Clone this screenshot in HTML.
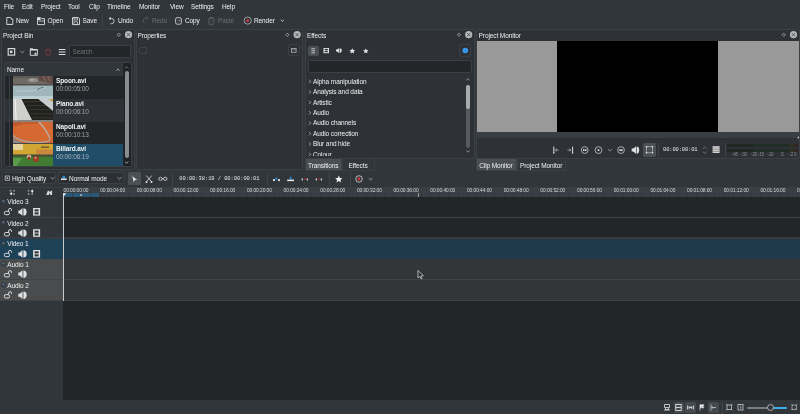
<!DOCTYPE html>
<html><head><meta charset="utf-8">
<style>
*{margin:0;padding:0;box-sizing:border-box}
html,body{width:800px;height:414px;overflow:hidden;background:#31363b}
body{position:relative;font-family:"Liberation Sans",sans-serif;font-size:6.5px;color:#eff0f1}
#w{position:absolute;left:0;top:0;width:800px;height:414px;will-change:transform;overflow:hidden}
.a{position:absolute}
.t{position:absolute;white-space:nowrap;line-height:8px;letter-spacing:-0.1px}
.dis{color:#6b7075}
.mono{font-family:"Liberation Mono",monospace}
svg{position:absolute;left:0;top:0}
.panel{position:absolute;background:#2e3236;border:1px solid #3b4045;border-radius:2px}
</style></head><body><div id="w">
<div class="t " style="left:4px;top:2.6999999999999993px;">File</div>
<div class="t " style="left:22px;top:2.6999999999999993px;">Edit</div>
<div class="t " style="left:41px;top:2.6999999999999993px;">Project</div>
<div class="t " style="left:68px;top:2.6999999999999993px;">Tool</div>
<div class="t " style="left:89px;top:2.6999999999999993px;">Clip</div>
<div class="t " style="left:107px;top:2.6999999999999993px;">Timeline</div>
<div class="t " style="left:139px;top:2.6999999999999993px;">Monitor</div>
<div class="t " style="left:170px;top:2.6999999999999993px;">View</div>
<div class="t " style="left:191px;top:2.6999999999999993px;">Settings</div>
<div class="t " style="left:222px;top:2.6999999999999993px;">Help</div>
<div class="t " style="left:16px;top:16.5px;">New</div>
<div class="t " style="left:47.5px;top:16.5px;">Open</div>
<div class="t " style="left:82.5px;top:16.5px;">Save</div>
<div class="t " style="left:118px;top:16.5px;">Undo</div>
<div class="t dis" style="left:152px;top:16.5px;">Redo</div>
<div class="t " style="left:185px;top:16.5px;">Copy</div>
<div class="t dis" style="left:218px;top:16.5px;">Paste</div>
<div class="t " style="left:254px;top:16.5px;">Render</div>
<div class="a" style="left:101.5px;top:14px;width:1px;height:13px;background:#40454a;"></div>
<div class="panel" style="left:1px;top:29px;width:134px;height:141px"></div>
<div class="panel" style="left:136px;top:29px;width:167px;height:141px"></div>
<div class="panel" style="left:305px;top:29px;width:170px;height:130px"></div>
<div class="panel" style="left:476px;top:29px;width:324px;height:130px"></div>
<div class="t " style="left:3px;top:32.3px;">Project Bin</div>
<div class="t " style="left:137.5px;top:32.3px;">Properties</div>
<div class="t " style="left:307px;top:32.3px;">Effects</div>
<div class="t " style="left:478.6px;top:32.3px;">Project Monitor</div>
<div class="a" style="left:69px;top:45px;width:62px;height:13.4px;background:#232629;border:1px solid #3b4045;border-radius:2px"></div>
<div class="t dis" style="left:72.5px;top:48.1px;">Search</div>
<div class="a" style="left:4px;top:62px;width:127.5px;height:105px;background:#232629;border:1px solid #3b4045;border-radius:2px"></div>
<div class="a" style="left:5px;top:63px;width:118px;height:12.7px;background:#31363b;"></div>
<div class="a" style="left:5px;top:75.7px;width:118px;height:0.6px;background:#3b4045;"></div>
<div class="t " style="left:7px;top:66.3px;">Name</div>
<div class="a" style="left:5px;top:76px;width:118.5px;height:22.799999999999997px;background:#232629;"></div>
<div class="t " style="left:56px;top:77.0px;font-weight:bold">Spoon.avi</div>
<div class="t " style="left:56px;top:85.0px;color:#9da0a3;letter-spacing:-0.15px">00:00:05:00</div>
<div class="a" style="left:5px;top:98.8px;width:118.5px;height:23.0px;background:#2e3236;"></div>
<div class="t " style="left:56px;top:99.8px;font-weight:bold">Piano.avi</div>
<div class="t " style="left:56px;top:107.8px;color:#9da0a3;letter-spacing:-0.15px">00:00:06:10</div>
<div class="a" style="left:5px;top:121.8px;width:118.5px;height:22.500000000000014px;background:#232629;"></div>
<div class="t " style="left:56px;top:122.80000000000001px;font-weight:bold">Napoli.avi</div>
<div class="t " style="left:56px;top:130.8px;color:#9da0a3;letter-spacing:-0.15px">00:00:10:13</div>
<div class="a" style="left:5px;top:144.3px;width:8px;height:21.899999999999977px;background:#232629;"></div>
<div class="a" style="left:53px;top:144.3px;width:69.8px;height:21.899999999999977px;background:#1f4c67;"></div>
<div class="t " style="left:56px;top:145.3px;font-weight:bold">Billard.avi</div>
<div class="t " style="left:56px;top:153.3px;color:#a5b5c0;letter-spacing:-0.15px">00:00:06:19</div>
<div class="a" style="left:8.5px;top:76px;width:0.6px;height:90px;background:#3a3f44;"></div>
<div class="a" style="left:12.5px;top:76px;width:0.6px;height:90px;background:#3a3f44;"></div>
<svg style="left:13px;top:76px;height:22.8px" width="40" height="22.8" viewBox="0 0 40 22.5" preserveAspectRatio="none"><defs><filter id="bl"><feGaussianBlur stdDeviation="0.5"/></filter></defs>
<g filter="url(#bl)">
<rect x="-1" y="-1" width="42" height="10" fill="#6e6a66"/>
<rect x="-1" y="-1" width="42" height="3" fill="#5e5a57"/>
<ellipse cx="20" cy="4.2" rx="5" ry="2.2" fill="#8e8c88"/>
<ellipse cx="19" cy="3.6" rx="2.5" ry="1" fill="#a8a6a2"/>
<path d="M26 -1h15v9l-7 -1.5 -8 -2z" fill="#5e4a44"/>
<path d="M30 0l3 5.5M34.5 -0.5l3 6" stroke="#8a6a60" stroke-width="1"/>
<rect x="-1" y="8.2" width="42" height="1.2" fill="#4a3e38"/>
<rect x="-1" y="9.3" width="42" height="14" fill="#9fb7bb"/>
<rect x="-1" y="19.8" width="42" height="4" fill="#bcd0d4"/>
<path d="M2 15l20 -0.5 11 -3" stroke="#c8d8da" stroke-width="0.6" fill="none"/>
<path d="M24 14l3 -2 3.5 -0.8" stroke="#5a6a6c" stroke-width="0.9" fill="none"/>
</g></svg>
<svg style="left:13px;top:98.8px;height:23px" width="40" height="23" viewBox="0 0 40 22.5" preserveAspectRatio="none"><defs><filter id="bl2"><feGaussianBlur stdDeviation="0.5"/></filter></defs>
<g filter="url(#bl2)">
<rect x="-1" y="-1" width="42" height="25" fill="#cfcfce"/><rect x="-1" y="20.5" width="42" height="3" fill="#8a8480"/>
<path d="M8 -1h23l12 13v8.5h-24z" fill="#22201e"/>
<path d="M11 2.5h21M13.5 6.5h23M16 10.5h25M18 14.5h23M20 18.5h21" stroke="#3d3a37" stroke-width="0.9"/>
<path d="M24 -1h17v13.5z" fill="#c9cdd0"/>
<path d="M33 -1h8v4.5z" fill="#c2a650"/>
<path d="M1.5 -1h1.2l1 22h-1.2z" fill="#eeeeec"/>
</g></svg>
<svg style="left:13px;top:121.8px;height:22.5px" width="40" height="22.5" viewBox="0 0 40 23" preserveAspectRatio="none"><defs><filter id="bl3"><feGaussianBlur stdDeviation="0.5"/></filter></defs>
<g filter="url(#bl3)">
<rect x="-1" y="-1" width="42" height="25" fill="#d46a32"/>
<path d="M-1 4q14 -4 26 -3" stroke="#c45a2a" stroke-width="2" fill="none"/>
<path d="M-1 -1h12l-4 3h-8z" fill="#b85a34"/>
<path d="M-1 13q8 8 24 8q12 0 14 -3" stroke="#a9a5a2" stroke-width="1.6" fill="none"/>
<path d="M-1 15q6 7 22 8h-22z" fill="#8a8886"/>
<path d="M25 -1q8 8 12 18" stroke="#b8b4b0" stroke-width="1.2" fill="none"/>
<path d="M30 -1h11v8q-4 -6 -11 -8z" fill="#c96a3a"/>
<rect x="-1" y="21.5" width="42" height="3" fill="#4a4644"/>
</g></svg>
<svg style="left:13px;top:144.3px;height:21.9px" width="40" height="21.9" viewBox="0 0 40 22" preserveAspectRatio="none"><defs><filter id="bl4"><feGaussianBlur stdDeviation="0.5"/></filter></defs>
<g filter="url(#bl4)">
<rect x="-1" y="-1" width="42" height="12" fill="#d2a630"/>
<rect x="-1" y="-1" width="11" height="7" fill="#e6d4a0"/>
<rect x="23" y="5.5" width="18" height="5" fill="#c9883c"/>
<rect x="28" y="2.5" width="8" height="1.4" fill="#6a5a30"/>
<rect x="-1" y="10.5" width="42" height="2.2" fill="#4d4a3a"/>
<rect x="-1" y="12.5" width="42" height="11" fill="#3f7c33"/>
<path d="M-1 14h10l-6 9h-5z" fill="#5a9a4a"/>
<circle cx="16" cy="13" r="2.3" fill="#d0b8a0"/>
<circle cx="16" cy="14.2" r="1.6" fill="#9a3828"/>
<circle cx="23" cy="15" r="3" fill="#a23a26"/>
<circle cx="22.5" cy="13.8" r="1" fill="#e0a890"/>
</g></svg>

<div class="a" style="left:123.5px;top:63px;width:7px;height:103px;background:#1f2225;"></div>
<div class="a" style="left:124.6px;top:71px;width:4px;height:86.5px;background:#8a8d90;border-radius:2px"></div>
<div class="a" style="left:139px;top:46.8px;width:8px;height:7.5px;border:1px solid #3f4449;border-radius:2px"></div>
<div class="a" style="left:287.8px;top:44.3px;width:11.8px;height:12px;border:1px solid #3a3f44;border-radius:2px"></div>
<div class="a" style="left:308px;top:45.5px;width:10.8px;height:10.5px;background:#4b5055;border-radius:2px"></div>
<div class="a" style="left:459px;top:44.3px;width:12.4px;height:12.3px;border:1px solid #3a3f44;border-radius:2px"></div>
<div class="a" style="left:308px;top:59.5px;width:163.5px;height:13px;background:#232629;border:1px solid #3b4045;border-radius:2px"></div>
<div class="t " style="left:313px;top:77.7px;">Alpha manipulation</div>
<div class="t " style="left:313px;top:88.12px;">Analysis and data</div>
<div class="t " style="left:313px;top:98.54px;">Artistic</div>
<div class="t " style="left:313px;top:108.96000000000001px;">Audio</div>
<div class="t " style="left:313px;top:119.38px;">Audio channels</div>
<div class="t " style="left:313px;top:129.8px;">Audio correction</div>
<div class="t " style="left:313px;top:140.22px;">Blur and hide</div>
<div class="t " style="left:313px;top:150.64px;">Colour</div>
<div class="a" style="left:306px;top:155.6px;width:159px;height:2.2px;background:#2e3236;"></div>
<div class="a" style="left:466px;top:84.5px;width:3.8px;height:63px;background:#575b5f;border-radius:2px"></div>
<div class="a" style="left:466px;top:84.5px;width:3.8px;height:24.5px;background:#a9abad;border-radius:2px"></div>
<div class="a" style="left:305px;top:158px;width:37px;height:12.6px;background:#4a4f54;border:1px solid #3b4045"></div>
<div class="a" style="left:342px;top:158px;width:32.5px;height:12.6px;background:#31363b;border:1px solid #3b4045"></div>
<div class="t " style="left:308px;top:161.9px;">Transitions</div>
<div class="t " style="left:348.5px;top:161.9px;">Effects</div>
<div class="a" style="left:476.7px;top:41.2px;width:80.5px;height:91px;background:#999999;"></div>
<div class="a" style="left:557.2px;top:41.2px;width:161px;height:91px;background:#000000;"></div>
<div class="a" style="left:718.2px;top:41.2px;width:80.8px;height:91px;background:#999999;"></div>
<div class="a" style="left:476.7px;top:132.2px;width:322.3px;height:6px;background:#393e43;"></div>
<div class="a" style="left:476px;top:158px;width:41px;height:12.6px;background:#4a4f54;border:1px solid #3b4045"></div>
<div class="a" style="left:517px;top:158px;width:48.6px;height:12.6px;background:#31363b;border:1px solid #3b4045"></div>
<div class="t " style="left:479.2px;top:161.9px;">Clip Monitor</div>
<div class="t " style="left:520px;top:161.9px;">Project Monitor</div>
<div class="a" style="left:642.9px;top:143px;width:13.1px;height:13.6px;background:#4b5055;border-radius:1.5px"></div>
<div class="a" style="left:658.1px;top:143px;width:0.8px;height:14px;background:#40454a;"></div>
<div class="t mono" style="left:663px;top:146.1px;font-size:5.4px;color:#e6e7e8">00:00:00:01</div>
<div class="a" style="left:725.4px;top:143px;width:0.8px;height:14px;background:#40454a;"></div>
<div class="a" style="left:726.6px;top:144px;width:27.2px;height:3.2px;background:#1e2722;"></div>
<div class="a" style="left:753.8px;top:144px;width:35.4px;height:3.2px;background:#212e26;"></div>
<div class="a" style="left:789.2px;top:144px;width:5.8px;height:3.2px;background:#2f3024;"></div>
<div class="a" style="left:795px;top:144px;width:3.2px;height:3.2px;background:#332426;"></div>
<div class="a" style="left:726.6px;top:148.6px;width:27.2px;height:3.2px;background:#1e2722;"></div>
<div class="a" style="left:753.8px;top:148.6px;width:35.4px;height:3.2px;background:#212e26;"></div>
<div class="a" style="left:789.2px;top:148.6px;width:5.8px;height:3.2px;background:#2f3024;"></div>
<div class="a" style="left:795px;top:148.6px;width:3.2px;height:3.2px;background:#332426;"></div>
<div class="t" style="left:731.8px;top:152px;font-size:4.6px;line-height:5px;letter-spacing:-0.15px;color:#8a8c8e">-45</div>
<div class="t" style="left:740.8px;top:152px;font-size:4.6px;line-height:5px;letter-spacing:-0.15px;color:#8a8c8e">-30</div>
<div class="t" style="left:751px;top:152px;font-size:4.6px;line-height:5px;letter-spacing:-0.15px;color:#8a8c8e">-20</div>
<div class="t" style="left:757.8px;top:152px;font-size:4.6px;line-height:5px;letter-spacing:-0.15px;color:#8a8c8e">-15</div>
<div class="t" style="left:767.3px;top:152px;font-size:4.6px;line-height:5px;letter-spacing:-0.15px;color:#8a8c8e">-10</div>
<div class="t" style="left:779.8px;top:152px;font-size:4.6px;line-height:5px;letter-spacing:-0.15px;color:#8a8c8e">-5</div>
<div class="t" style="left:789.3px;top:152px;font-size:4.6px;line-height:5px;letter-spacing:-0.15px;color:#8a8c8e">-2</div>
<div class="t" style="left:794px;top:152px;font-size:4.6px;line-height:5px;letter-spacing:-0.15px;color:#8a8c8e">0</div>
<div class="a" style="left:1.6px;top:172.4px;width:54.8px;height:11.8px;background:#2c3034;border:1px solid #3b4045;border-radius:2px"></div>
<div class="a" style="left:58.2px;top:172.4px;width:65.6px;height:11.8px;background:#2c3034;border:1px solid #3b4045;border-radius:2px"></div>
<div class="t " style="left:12px;top:174.5px;">High Quality</div>
<div class="t " style="left:69.1px;top:174.5px;">Normal mode</div>
<div class="a" style="left:128px;top:172.3px;width:13.1px;height:13.1px;background:#4b5055;border-radius:1.5px"></div>
<div class="a" style="left:171.6px;top:172.3px;width:0.8px;height:13.5px;background:#40454a;"></div>
<div class="t mono" style="left:179.3px;top:175.1px;font-size:5.4px;letter-spacing:-0.03px;color:#e6e7e8">00:00:38:19 / 00:00:00:01</div>
<div class="a" style="left:267.2px;top:172.3px;width:0.8px;height:13.5px;background:#40454a;"></div>
<div class="a" style="left:328.6px;top:172.3px;width:0.8px;height:13.5px;background:#40454a;"></div>
<div class="a" style="left:350.3px;top:172.3px;width:0.8px;height:13.5px;background:#40454a;"></div>
<div class="a" style="left:0px;top:186.6px;width:800px;height:0.8px;background:#3b4045;"></div>
<div class="a" style="left:63px;top:187.4px;width:737px;height:9.6px;background:#3a3f45;"></div>
<div class="a" style="left:63.3px;top:193px;width:0.8px;height:4px;background:#30353a;"></div>
<div class="a" style="left:72.5px;top:193px;width:0.8px;height:4px;background:#30353a;"></div>
<div class="a" style="left:81.6px;top:193px;width:0.8px;height:4px;background:#30353a;"></div>
<div class="a" style="left:90.8px;top:193px;width:0.8px;height:4px;background:#30353a;"></div>
<div class="a" style="left:100.0px;top:193px;width:0.8px;height:4px;background:#30353a;"></div>
<div class="a" style="left:109.2px;top:193px;width:0.8px;height:4px;background:#30353a;"></div>
<div class="a" style="left:118.3px;top:193px;width:0.8px;height:4px;background:#30353a;"></div>
<div class="a" style="left:127.5px;top:193px;width:0.8px;height:4px;background:#30353a;"></div>
<div class="a" style="left:136.7px;top:193px;width:0.8px;height:4px;background:#30353a;"></div>
<div class="a" style="left:145.8px;top:193px;width:0.8px;height:4px;background:#30353a;"></div>
<div class="a" style="left:155.0px;top:193px;width:0.8px;height:4px;background:#30353a;"></div>
<div class="a" style="left:164.2px;top:193px;width:0.8px;height:4px;background:#30353a;"></div>
<div class="a" style="left:173.3px;top:193px;width:0.8px;height:4px;background:#30353a;"></div>
<div class="a" style="left:182.5px;top:193px;width:0.8px;height:4px;background:#30353a;"></div>
<div class="a" style="left:191.7px;top:193px;width:0.8px;height:4px;background:#30353a;"></div>
<div class="a" style="left:200.9px;top:193px;width:0.8px;height:4px;background:#30353a;"></div>
<div class="a" style="left:210.0px;top:193px;width:0.8px;height:4px;background:#30353a;"></div>
<div class="a" style="left:219.2px;top:193px;width:0.8px;height:4px;background:#30353a;"></div>
<div class="a" style="left:228.4px;top:193px;width:0.8px;height:4px;background:#30353a;"></div>
<div class="a" style="left:237.5px;top:193px;width:0.8px;height:4px;background:#30353a;"></div>
<div class="a" style="left:246.7px;top:193px;width:0.8px;height:4px;background:#30353a;"></div>
<div class="a" style="left:255.9px;top:193px;width:0.8px;height:4px;background:#30353a;"></div>
<div class="a" style="left:265.0px;top:193px;width:0.8px;height:4px;background:#30353a;"></div>
<div class="a" style="left:274.2px;top:193px;width:0.8px;height:4px;background:#30353a;"></div>
<div class="a" style="left:283.4px;top:193px;width:0.8px;height:4px;background:#30353a;"></div>
<div class="a" style="left:292.6px;top:193px;width:0.8px;height:4px;background:#30353a;"></div>
<div class="a" style="left:301.7px;top:193px;width:0.8px;height:4px;background:#30353a;"></div>
<div class="a" style="left:310.9px;top:193px;width:0.8px;height:4px;background:#30353a;"></div>
<div class="a" style="left:320.1px;top:193px;width:0.8px;height:4px;background:#30353a;"></div>
<div class="a" style="left:329.2px;top:193px;width:0.8px;height:4px;background:#30353a;"></div>
<div class="a" style="left:338.4px;top:193px;width:0.8px;height:4px;background:#30353a;"></div>
<div class="a" style="left:347.6px;top:193px;width:0.8px;height:4px;background:#30353a;"></div>
<div class="a" style="left:356.7px;top:193px;width:0.8px;height:4px;background:#30353a;"></div>
<div class="a" style="left:365.9px;top:193px;width:0.8px;height:4px;background:#30353a;"></div>
<div class="a" style="left:375.1px;top:193px;width:0.8px;height:4px;background:#30353a;"></div>
<div class="a" style="left:384.2px;top:193px;width:0.8px;height:4px;background:#30353a;"></div>
<div class="a" style="left:393.4px;top:193px;width:0.8px;height:4px;background:#30353a;"></div>
<div class="a" style="left:402.6px;top:193px;width:0.8px;height:4px;background:#30353a;"></div>
<div class="a" style="left:411.8px;top:193px;width:0.8px;height:4px;background:#30353a;"></div>
<div class="a" style="left:420.9px;top:193px;width:0.8px;height:4px;background:#30353a;"></div>
<div class="a" style="left:430.1px;top:193px;width:0.8px;height:4px;background:#30353a;"></div>
<div class="a" style="left:439.3px;top:193px;width:0.8px;height:4px;background:#30353a;"></div>
<div class="a" style="left:448.4px;top:193px;width:0.8px;height:4px;background:#30353a;"></div>
<div class="a" style="left:457.6px;top:193px;width:0.8px;height:4px;background:#30353a;"></div>
<div class="a" style="left:466.8px;top:193px;width:0.8px;height:4px;background:#30353a;"></div>
<div class="a" style="left:476.0px;top:193px;width:0.8px;height:4px;background:#30353a;"></div>
<div class="a" style="left:485.1px;top:193px;width:0.8px;height:4px;background:#30353a;"></div>
<div class="a" style="left:494.3px;top:193px;width:0.8px;height:4px;background:#30353a;"></div>
<div class="a" style="left:503.5px;top:193px;width:0.8px;height:4px;background:#30353a;"></div>
<div class="a" style="left:512.6px;top:193px;width:0.8px;height:4px;background:#30353a;"></div>
<div class="a" style="left:521.8px;top:193px;width:0.8px;height:4px;background:#30353a;"></div>
<div class="a" style="left:531.0px;top:193px;width:0.8px;height:4px;background:#30353a;"></div>
<div class="a" style="left:540.1px;top:193px;width:0.8px;height:4px;background:#30353a;"></div>
<div class="a" style="left:549.3px;top:193px;width:0.8px;height:4px;background:#30353a;"></div>
<div class="a" style="left:558.5px;top:193px;width:0.8px;height:4px;background:#30353a;"></div>
<div class="a" style="left:567.6px;top:193px;width:0.8px;height:4px;background:#30353a;"></div>
<div class="a" style="left:576.8px;top:193px;width:0.8px;height:4px;background:#30353a;"></div>
<div class="a" style="left:586.0px;top:193px;width:0.8px;height:4px;background:#30353a;"></div>
<div class="a" style="left:595.2px;top:193px;width:0.8px;height:4px;background:#30353a;"></div>
<div class="a" style="left:604.3px;top:193px;width:0.8px;height:4px;background:#30353a;"></div>
<div class="a" style="left:613.5px;top:193px;width:0.8px;height:4px;background:#30353a;"></div>
<div class="a" style="left:622.7px;top:193px;width:0.8px;height:4px;background:#30353a;"></div>
<div class="a" style="left:631.8px;top:193px;width:0.8px;height:4px;background:#30353a;"></div>
<div class="a" style="left:641.0px;top:193px;width:0.8px;height:4px;background:#30353a;"></div>
<div class="a" style="left:650.2px;top:193px;width:0.8px;height:4px;background:#30353a;"></div>
<div class="a" style="left:659.3px;top:193px;width:0.8px;height:4px;background:#30353a;"></div>
<div class="a" style="left:668.5px;top:193px;width:0.8px;height:4px;background:#30353a;"></div>
<div class="a" style="left:677.7px;top:193px;width:0.8px;height:4px;background:#30353a;"></div>
<div class="a" style="left:686.9px;top:193px;width:0.8px;height:4px;background:#30353a;"></div>
<div class="a" style="left:696.0px;top:193px;width:0.8px;height:4px;background:#30353a;"></div>
<div class="a" style="left:705.2px;top:193px;width:0.8px;height:4px;background:#30353a;"></div>
<div class="a" style="left:714.4px;top:193px;width:0.8px;height:4px;background:#30353a;"></div>
<div class="a" style="left:723.5px;top:193px;width:0.8px;height:4px;background:#30353a;"></div>
<div class="a" style="left:732.7px;top:193px;width:0.8px;height:4px;background:#30353a;"></div>
<div class="a" style="left:741.9px;top:193px;width:0.8px;height:4px;background:#30353a;"></div>
<div class="a" style="left:751.0px;top:193px;width:0.8px;height:4px;background:#30353a;"></div>
<div class="a" style="left:760.2px;top:193px;width:0.8px;height:4px;background:#30353a;"></div>
<div class="a" style="left:769.4px;top:193px;width:0.8px;height:4px;background:#30353a;"></div>
<div class="a" style="left:778.6px;top:193px;width:0.8px;height:4px;background:#30353a;"></div>
<div class="a" style="left:787.7px;top:193px;width:0.8px;height:4px;background:#30353a;"></div>
<div class="a" style="left:796.9px;top:193px;width:0.8px;height:4px;background:#30353a;"></div>
<div class="t" style="left:63.50px;top:188.4px;font-size:4.85px;line-height:6px;letter-spacing:-0.06px;color:#d6d7d9">00:00:00:00</div>
<div class="t" style="left:100.18px;top:188.4px;font-size:4.85px;line-height:6px;letter-spacing:-0.06px;color:#d6d7d9">00:00:04:00</div>
<div class="t" style="left:136.86px;top:188.4px;font-size:4.85px;line-height:6px;letter-spacing:-0.06px;color:#d6d7d9">00:00:08:00</div>
<div class="t" style="left:173.54px;top:188.4px;font-size:4.85px;line-height:6px;letter-spacing:-0.06px;color:#d6d7d9">00:00:12:00</div>
<div class="t" style="left:210.22px;top:188.4px;font-size:4.85px;line-height:6px;letter-spacing:-0.06px;color:#d6d7d9">00:00:16:00</div>
<div class="t" style="left:246.90px;top:188.4px;font-size:4.85px;line-height:6px;letter-spacing:-0.06px;color:#d6d7d9">00:00:20:00</div>
<div class="t" style="left:283.58px;top:188.4px;font-size:4.85px;line-height:6px;letter-spacing:-0.06px;color:#d6d7d9">00:00:24:00</div>
<div class="t" style="left:320.26px;top:188.4px;font-size:4.85px;line-height:6px;letter-spacing:-0.06px;color:#d6d7d9">00:00:28:00</div>
<div class="t" style="left:356.94px;top:188.4px;font-size:4.85px;line-height:6px;letter-spacing:-0.06px;color:#d6d7d9">00:00:32:00</div>
<div class="t" style="left:393.62px;top:188.4px;font-size:4.85px;line-height:6px;letter-spacing:-0.06px;color:#d6d7d9">00:00:36:00</div>
<div class="t" style="left:430.30px;top:188.4px;font-size:4.85px;line-height:6px;letter-spacing:-0.06px;color:#d6d7d9">00:00:40:00</div>
<div class="t" style="left:466.98px;top:188.4px;font-size:4.85px;line-height:6px;letter-spacing:-0.06px;color:#d6d7d9">00:00:44:00</div>
<div class="t" style="left:503.66px;top:188.4px;font-size:4.85px;line-height:6px;letter-spacing:-0.06px;color:#d6d7d9">00:00:48:00</div>
<div class="t" style="left:540.34px;top:188.4px;font-size:4.85px;line-height:6px;letter-spacing:-0.06px;color:#d6d7d9">00:00:52:00</div>
<div class="t" style="left:577.02px;top:188.4px;font-size:4.85px;line-height:6px;letter-spacing:-0.06px;color:#d6d7d9">00:00:56:00</div>
<div class="t" style="left:613.70px;top:188.4px;font-size:4.85px;line-height:6px;letter-spacing:-0.06px;color:#d6d7d9">00:01:00:00</div>
<div class="t" style="left:650.38px;top:188.4px;font-size:4.85px;line-height:6px;letter-spacing:-0.06px;color:#d6d7d9">00:01:04:00</div>
<div class="t" style="left:687.06px;top:188.4px;font-size:4.85px;line-height:6px;letter-spacing:-0.06px;color:#d6d7d9">00:01:08:00</div>
<div class="t" style="left:723.74px;top:188.4px;font-size:4.85px;line-height:6px;letter-spacing:-0.06px;color:#d6d7d9">00:01:12:00</div>
<div class="t" style="left:760.42px;top:188.4px;font-size:4.85px;line-height:6px;letter-spacing:-0.06px;color:#d6d7d9">00:01:16:00</div>
<div class="t" style="left:797.10px;top:188.4px;font-size:4.85px;line-height:6px;letter-spacing:-0.06px;color:#d6d7d9">00:01:20:00</div>
<div class="a" style="left:63.8px;top:193.2px;width:8.17px;height:3.8px;background:#2a5876;"></div>
<div class="a" style="left:73.0px;top:193.2px;width:8.17px;height:3.8px;background:#2a5876;"></div>
<div class="a" style="left:82.1px;top:193.2px;width:8.17px;height:3.8px;background:#2a5876;"></div>
<div class="a" style="left:91.3px;top:193.2px;width:8.17px;height:3.8px;background:#2a5876;"></div>
<div class="a" style="left:417.6px;top:193px;width:1.2px;height:4px;background:#8aa498;"></div>
<div class="a" style="left:0px;top:197px;width:63px;height:104px;background:#3e4348;"></div>
<div class="a" style="left:63px;top:197px;width:737px;height:104px;background:#3e4348;"></div>
<div class="a" style="left:0px;top:237.2px;width:800px;height:1.8px;background:#383c41;"></div>
<div class="a" style="left:0px;top:197px;width:62.6px;height:19.599999999999994px;background:#31363b;"></div>
<div class="a" style="left:63.5px;top:197px;width:736.5px;height:19.599999999999994px;background:#232629;"></div>
<div class="t " style="left:7.3px;top:198.3px;">Video 3</div>
<div class="a" style="left:0px;top:218.2px;width:62.6px;height:19.0px;background:#31363b;"></div>
<div class="a" style="left:63.5px;top:218.2px;width:736.5px;height:19.0px;background:#232629;"></div>
<div class="t " style="left:7.3px;top:219.5px;">Video 2</div>
<div class="a" style="left:0px;top:239px;width:62.6px;height:19.600000000000023px;background:#1d4157;"></div>
<div class="a" style="left:63.5px;top:239px;width:736.5px;height:19.600000000000023px;background:#1f3b4b;"></div>
<div class="t " style="left:7.3px;top:240.3px;">Video 1</div>
<div class="a" style="left:0px;top:259.2px;width:62.6px;height:20.30000000000001px;background:#4a4b4c;"></div>
<div class="a" style="left:63.5px;top:259.2px;width:736.5px;height:20.30000000000001px;background:#323639;"></div>
<div class="t " style="left:7.3px;top:260.5px;">Audio 1</div>
<div class="a" style="left:0px;top:280.3px;width:62.6px;height:19.899999999999977px;background:#4a4b4c;"></div>
<div class="a" style="left:63.5px;top:280.3px;width:736.5px;height:19.899999999999977px;background:#323639;"></div>
<div class="t " style="left:7.3px;top:281.6px;">Audio 2</div>
<div class="a" style="left:0px;top:301px;width:63px;height:99px;background:#31363b;"></div>
<div class="a" style="left:63px;top:301px;width:737px;height:99.3px;background:#232629;"></div>
<div class="a" style="left:63.5px;top:300.2px;width:736.5px;height:0.8px;background:#3e4348;"></div>
<div class="a" style="left:62.6px;top:193px;width:0.9px;height:108px;background:#c8c9ca;"></div>
<div class="a" style="left:673.5px;top:402px;width:10.700000000000045px;height:11px;background:#454a4f;border-radius:1.5px"></div>
<div class="a" style="left:685px;top:402px;width:11px;height:11px;background:#454a4f;border-radius:1.5px"></div>
<div class="a" style="left:708px;top:402px;width:11.200000000000045px;height:11px;background:#454a4f;border-radius:1.5px"></div>
<div class="a" style="left:722.2px;top:402px;width:0.8px;height:12px;background:#40454a;"></div>
<div class="a" style="left:747px;top:406.8px;width:24px;height:1.8px;background:#7a7d80;border-radius:1px"></div>
<div class="a" style="left:770px;top:406.8px;width:17px;height:1.8px;background:#3daee9;border-radius:1px"></div>
<div class="a" style="left:766.8px;top:403.6px;width:7.6px;height:7.6px;background:#31363b;border:1px solid #b0b2b4;border-radius:50%"></div>
<svg width="800" height="414"><path d="M6.8 17.5h4l2 2v5h-6z" fill="none" stroke="#dfe0e1" stroke-width="0.9"/><path d="M10.8 17.5v2h2z" fill="#dfe0e1"/><path d="M8 21v2.5h3.5" stroke="#555" stroke-width="0.6" fill="none"/><path d="M37.5 17.6h3l1 1h3v6h-7z" fill="none" stroke="#dfe0e1" stroke-width="0.9"/><rect x="37.5" y="18" width="3" height="2" fill="#dfe0e1"/><path d="M38.5 21h5.5" stroke="#dfe0e1" stroke-width="0.8"/><path d="M72.5 17.6h6l1 1v6h-7z" fill="none" stroke="#dfe0e1" stroke-width="0.9"/><rect x="74" y="18" width="3.5" height="2" fill="none" stroke="#dfe0e1" stroke-width="0.7"/><rect x="74" y="21.8" width="3.5" height="2.5" fill="none" stroke="#dfe0e1" stroke-width="0.7"/><path d="M109 18.5l1.8 -1.2M109 18.5l1.8 1.2M109.2 18.5h2.3a2.6 2.6 0 0 1 0 5.2h-1.2" fill="none" stroke="#dfe0e1" stroke-width="0.8"/><path d="M148 18l-1.6 -1.1M148 18l-1.6 1.1M147.8 18h-1.6a2.8 2.8 0 0 0 -1.5 5.3" fill="none" stroke="#5d6166" stroke-width="0.8"/><rect x="175.6" y="17.6" width="5.8" height="6.6" rx="1.6" fill="none" stroke="#cfd0d1" stroke-width="0.9"/><path d="M177 19.3h2.2l1.2 1.2v2.3h-3.4z" fill="#45494d"/><path d="M177 19.3h2.2l1.2 1.2h-1.2v-1.2" fill="#e6e6e6"/><rect x="208.8" y="18" width="5" height="6.3" rx="1" fill="none" stroke="#5f6367" stroke-width="0.9"/><rect x="209.8" y="17.2" width="3" height="1.4" fill="#5f6367"/><path d="M210.3 20.5h2M210.3 22.2h2" stroke="#4f5357" stroke-width="0.6"/><circle cx="247.7" cy="20.6" r="3.6" fill="none" stroke="#c8c9ca" stroke-width="0.7"/><circle cx="247.7" cy="20.6" r="1.35" fill="#e3303e"/><path d="M280.8 19.8l1.6 1.5 1.6 -1.5" fill="none" stroke="#dfe0e1" stroke-width="0.8"/><path d="M118.8 33.1l1.65 1.65 -1.65 1.65 -1.65 -1.65z" fill="none" stroke="#c0c1c2" stroke-width="0.7"/><circle cx="128.5" cy="34.7" r="3.6" fill="#b4b6b8"/><path d="M126.9 33.1l3.2 3.2M130.1 33.1l-3.2 3.2" stroke="#3a3e42" stroke-width="0.7"/><path d="M287.4 33.1l1.65 1.65 -1.65 1.65 -1.65 -1.65z" fill="none" stroke="#c0c1c2" stroke-width="0.7"/><circle cx="297.1" cy="34.7" r="3.6" fill="#b4b6b8"/><path d="M295.5 33.1l3.2 3.2M298.70000000000005 33.1l-3.2 3.2" stroke="#3a3e42" stroke-width="0.7"/><path d="M459 33.1l1.65 1.65 -1.65 1.65 -1.65 -1.65z" fill="none" stroke="#c0c1c2" stroke-width="0.7"/><circle cx="468.7" cy="34.7" r="3.6" fill="#b4b6b8"/><path d="M467.09999999999997 33.1l3.2 3.2M470.3 33.1l-3.2 3.2" stroke="#3a3e42" stroke-width="0.7"/><path d="M783.7 33.1l1.65 1.65 -1.65 1.65 -1.65 -1.65z" fill="none" stroke="#c0c1c2" stroke-width="0.7"/><circle cx="793.5" cy="34.7" r="3.6" fill="#b4b6b8"/><path d="M791.9 33.1l3.2 3.2M795.1 33.1l-3.2 3.2" stroke="#3a3e42" stroke-width="0.7"/><rect x="8.2" y="48.6" width="6.5" height="6.5" fill="none" stroke="#dfe0e1" stroke-width="1.1"/><rect x="10" y="50.6" width="2.4" height="2.4" fill="#dfe0e1"/><path d="M20.3 51l2 1.8 2 -1.8" fill="none" stroke="#aaa" stroke-width="0.8"/><path d="M30.3 48.7h2.5l0.8 0.8h3.8v5.8h-7.1z" fill="none" stroke="#dfe0e1" stroke-width="0.9"/><rect x="30.3" y="49" width="7" height="1.5" fill="#dfe0e1"/><path d="M35.5 52.5v2.6M34.2 53.8h2.6" stroke="#dfe0e1" stroke-width="0.8"/><path d="M45.2 50h6M46 50.3l0.5 5h3.4l0.5 -5M47 49.3h2.2" fill="none" stroke="#7d3a3e" stroke-width="0.9"/><path d="M58.8 49.5h6.6M58.8 52h6.6M58.8 54.5h6.6" stroke="#dfe0e1" stroke-width="1"/><path d="M116.3 70.5l1.6 -1.5 1.6 1.5" fill="none" stroke="#c8c9ca" stroke-width="0.8"/><path d="M125 68.3l1.7 -1.6 1.7 1.6" fill="none" stroke="#8a8c8e" stroke-width="0.7"/><path d="M125 161.6l1.7 1.6 1.7 -1.6" fill="none" stroke="#c8cacc" stroke-width="0.8"/><rect x="291" y="48" width="5.6" height="4.8" fill="#9a9c9e"/><rect x="292" y="49.3" width="3.6" height="2.6" fill="#3a3e42"/><path d="M311.4 48.8h3.6M311.4 50.8h3.6M311.4 52.8h3.6" stroke="#dfe0e1" stroke-width="0.8"/><rect x="323.5" y="48" width="5.5" height="5.2" fill="#dfe0e1"/><rect x="324.7" y="48.9" width="3.1" height="1.3" fill="#2e3236"/><rect x="324.7" y="50.9" width="3.1" height="1.3" fill="#2e3236"/><path d="M336 49.6h1l2 -1.3v4.6l-2 -1.3h-1z" fill="#dfe0e1"/><path d="M339.6 48.3a2.2 2.3 0 0 1 0 4.6z" fill="#dfe0e1"/><path d="M352.3 48.2l0.95 1.75 1.9 0.3 -1.35 1.35 0.35 1.9 -1.85 -0.9 -1.85 0.9 0.35 -1.9 -1.35 -1.35 1.9 -0.3z" fill="#dfe0e1"/><path d="M365.8 48.4l0.85 1.6 1.75 0.25 -1.25 1.25 0.3 1.75 -1.65 -0.8 -1.65 0.8 0.3 -1.75 -1.25 -1.25 1.75 -0.25z" fill="#dfe0e1"/><circle cx="465.3" cy="50.5" r="2.8" fill="#3a9cf0"/><path d="M465.3 49.6v2" stroke="#1b5fa0" stroke-width="0.5"/><path d="M309 79.8l1.7 1.7 -1.7 1.7" fill="none" stroke="#c8cacc" stroke-width="0.7"/><path d="M309 90.22l1.7 1.7 -1.7 1.7" fill="none" stroke="#c8cacc" stroke-width="0.7"/><path d="M309 100.64l1.7 1.7 -1.7 1.7" fill="none" stroke="#c8cacc" stroke-width="0.7"/><path d="M309 111.06l1.7 1.7 -1.7 1.7" fill="none" stroke="#c8cacc" stroke-width="0.7"/><path d="M309 121.47999999999999l1.7 1.7 -1.7 1.7" fill="none" stroke="#c8cacc" stroke-width="0.7"/><path d="M309 131.9l1.7 1.7 -1.7 1.7" fill="none" stroke="#c8cacc" stroke-width="0.7"/><path d="M309 142.32l1.7 1.7 -1.7 1.7" fill="none" stroke="#c8cacc" stroke-width="0.7"/><path d="M309 152.73999999999998l1.7 1.7 -1.7 1.7" fill="none" stroke="#c8cacc" stroke-width="0.7"/><path d="M466.3 80.2l1.6 -1.5 1.6 1.5M466.3 150.6l1.6 1.5 1.6 -1.5" fill="none" stroke="#c0c2c4" stroke-width="0.7"/><path d="M799 136.2v2h-2z" fill="#ddd"/><path d="M553.8 146.6v6.4" stroke="#dfe0e1" stroke-width="1"/><circle cx="553.8" cy="153" r="0.7" fill="#dfe0e1"/><path d="M555.3 150h3.5M556.8 148.7l-1.4 1.3 1.4 1.3" stroke="#c0c1c2" stroke-width="0.7" fill="none"/><path d="M572.6 146.6v6.4" stroke="#dfe0e1" stroke-width="1"/><circle cx="572.6" cy="153" r="0.7" fill="#dfe0e1"/><path d="M567.5 150h3.5M569.6 148.7l1.4 1.3 -1.4 1.3" stroke="#c0c1c2" stroke-width="0.7" fill="none"/><circle cx="584.7" cy="150.1" r="3.4" fill="none" stroke="#c8c9ca" stroke-width="0.8"/><rect x="583" y="149.3" width="1.5" height="1.6" fill="#eee"/><rect x="585" y="149.3" width="1.5" height="1.6" fill="#eee"/><circle cx="598.5" cy="150.1" r="3.4" fill="none" stroke="#c8c9ca" stroke-width="0.8"/><rect x="597.8" y="149.2" width="1.5" height="1.8" fill="#eee"/><path d="M608 149.2l2.1 1.8 2.1 -1.8" fill="none" stroke="#b0b2b4" stroke-width="0.7"/><circle cx="621" cy="150.1" r="3.4" fill="none" stroke="#c8c9ca" stroke-width="0.8"/><rect x="619.3" y="149.4" width="3.4" height="1.4" fill="#eee"/><path d="M631.7 148.6h1.5l2.8 -2.2v7.4l-2.8 -2.2h-1.5z" fill="#dfe0e1"/><path d="M636.6 146.4a2.6 3.7 0 0 1 0 7.4z" fill="#dfe0e1"/><rect x="646.5" y="146.8" width="6" height="6" fill="none" stroke="#c8c9ca" stroke-width="0.6"/><circle cx="646.5" cy="146.8" r="0.8" fill="#eee"/><circle cx="652.5" cy="146.8" r="0.8" fill="#eee"/><circle cx="646.5" cy="152.8" r="0.8" fill="#eee"/><circle cx="652.5" cy="152.8" r="0.8" fill="#eee"/><path d="M703 148.8l1.8 -1.7 1.8 1.7M703 151.8l1.8 1.7 1.8 -1.7" fill="none" stroke="#999" stroke-width="0.6"/><rect x="712.6" y="146.2" width="7" height="6.8" fill="#d8d8d8"/><path d="M712.6 148h7M712.6 149.8h7M712.6 151.6h7" stroke="#555" stroke-width="0.5"/><rect x="5.2" y="176" width="4.3" height="4.3" fill="none" stroke="#c0c2c4" stroke-width="0.8"/><circle cx="7.35" cy="178.15" r="0.9" fill="#c0c2c4"/><path d="M50.5 177.3l2 1.8 2 -1.8" fill="none" stroke="#b0b2b4" stroke-width="0.8"/><rect x="62.5" y="175.8" width="2.6" height="2.4" fill="#1e8fe0"/><rect x="61" y="178.4" width="5.6" height="1.6" fill="#e6e6e6"/><path d="M117.5 177.3l2 1.8 2 -1.8" fill="none" stroke="#b0b2b4" stroke-width="0.8"/><path d="M132.3 176.2l4.8 3.6 -2.1 0.3 -1.2 2.2z" fill="#dfe0e1"/><path d="M132 175.5v1" stroke="#dfe0e1" stroke-width="0.5"/><path d="M146.2 175.5l5.6 6.5M151.8 175.5l-5.6 6.5" stroke="#dfe0e1" stroke-width="0.8"/><circle cx="146.5" cy="182" r="1" fill="#dfe0e1"/><circle cx="151.5" cy="182" r="1" fill="#dfe0e1"/><rect x="158.8" y="177.2" width="3.4" height="3.2" rx="1.6" fill="none" stroke="#dfe0e1" stroke-width="0.8"/><rect x="163.6" y="177.2" width="3.4" height="3.2" rx="1.6" fill="none" stroke="#dfe0e1" stroke-width="0.8"/><path d="M162 178.8h1.8" stroke="#dfe0e1" stroke-width="0.8"/><path d="M276.3 177.3l1.3 1.5 -1.3 1.5 -1.3 -1.5z" fill="#1e8fe0"/><circle cx="274" cy="180.1" r="1.1" fill="#eee"/><circle cx="279" cy="180.1" r="1.1" fill="#eee"/><path d="M290.6 176.6l1.3 1.5 -1.3 1.5 -1.3 -1.5z" fill="#1e8fe0"/><rect x="287.2" y="179.6" width="6.8" height="1.5" fill="#eee"/><path d="M302.8 178.2a1.2 1.2 0 0 0 0 2.4zM306.8 178.2a1.2 1.2 0 0 1 0 2.4z" fill="#eee"/><rect x="304.2" y="178.6" width="1.3" height="1.3" fill="#d02030"/><path d="M316.8 178.2a1.2 1.2 0 0 0 0 2.4zM320.8 178.2a1.2 1.2 0 0 1 0 2.4z" fill="#eee"/><rect x="318.2" y="178.6" width="1.3" height="1.3" fill="#d02030"/><path d="M338.8 175.6l1.1 2.3 2.5 0.3 -1.9 1.7 0.6 2.5 -2.3 -1.3 -2.3 1.3 0.6 -2.5 -1.9 -1.7 2.5 -0.3z" fill="#f0f0f0"/><circle cx="359" cy="179" r="3.3" fill="none" stroke="#d8d8d8" stroke-width="0.8"/><circle cx="359" cy="179" r="1.4" fill="#e03040"/><path d="M368.8 178.2l1.8 1.6 1.8 -1.6" fill="none" stroke="#b0b2b4" stroke-width="0.8"/><path d="M63.5 193.2h3l-3 3z" fill="#eee"/><rect x="80.5" y="194.2" width="1.3" height="1.8" fill="#ddd"/><circle cx="10.6" cy="190.7" r="1.05" fill="#8e9092"/><circle cx="14" cy="190.7" r="1.05" fill="#8e9092"/><circle cx="14" cy="194" r="1.05" fill="#8e9092"/><path d="M11.2 191.9l1.3 1.8 -1.3 1.5 -1.3 -1.5z" fill="#f2f2f2"/><circle cx="28.6" cy="190.7" r="1.05" fill="#8e9092"/><circle cx="28.6" cy="194" r="1.05" fill="#8e9092"/><circle cx="32.2" cy="194" r="1.05" fill="#8e9092"/><path d="M32.2 189.5l1.3 1.6 -1.3 1.8 -1.3 -1.8z" fill="#f2f2f2"/><path d="M46.2 195l1.6 -4.2h1.2l0.9 1.6 0.9 -1.6h1.3v4.2h-1.5l-0.9 -1.9 -0.9 1.9z" fill="#d8d9da"/><circle cx="3.4" cy="201.6" r="2.3" fill="#3a4550" stroke="#27303a" stroke-width="0.5"/><ellipse cx="3.3" cy="200.9" rx="1.2" ry="0.9" fill="#6c7a86" opacity="0.7"/><rect x="4.3" y="211.3" width="5.2" height="3.4" rx="1.5" fill="none" stroke="#dfe0e1" stroke-width="0.95"/><path d="M8.6 211.2v-1.4a1.45 1.45 0 0 1 2.9 0v0.9" fill="none" stroke="#dfe0e1" stroke-width="0.95"/><path d="M18.3 210.4h1.5l2.7 -2.3v7.6l-2.7 -2.3h-1.5z" fill="#dfe0e1"/><path d="M23.4 208.3a3.2 3.6 0 0 1 0 7.3z" fill="#dfe0e1"/><rect x="33.1" y="208" width="7" height="7.6" fill="#dfe0e1"/><rect x="34.6" y="209.3" width="4" height="2.1" fill="#31363b"/><rect x="34.6" y="212.3" width="4" height="2.1" fill="#31363b"/><circle cx="3.4" cy="222.79999999999998" r="2.3" fill="#3a4550" stroke="#27303a" stroke-width="0.5"/><ellipse cx="3.3" cy="222.1" rx="1.2" ry="0.9" fill="#6c7a86" opacity="0.7"/><rect x="4.3" y="232.5" width="5.2" height="3.4" rx="1.5" fill="none" stroke="#dfe0e1" stroke-width="0.95"/><path d="M8.6 232.39999999999998v-1.4a1.45 1.45 0 0 1 2.9 0v0.9" fill="none" stroke="#dfe0e1" stroke-width="0.95"/><path d="M18.3 231.6h1.5l2.7 -2.3v7.6l-2.7 -2.3h-1.5z" fill="#dfe0e1"/><path d="M23.4 229.5a3.2 3.6 0 0 1 0 7.3z" fill="#dfe0e1"/><rect x="33.1" y="229.2" width="7" height="7.6" fill="#dfe0e1"/><rect x="34.6" y="230.5" width="4" height="2.1" fill="#31363b"/><rect x="34.6" y="233.5" width="4" height="2.1" fill="#31363b"/><circle cx="3.4" cy="243.6" r="2.3" fill="#3a4550" stroke="#27303a" stroke-width="0.5"/><ellipse cx="3.3" cy="242.9" rx="1.2" ry="0.9" fill="#6c7a86" opacity="0.7"/><rect x="4.3" y="253.3" width="5.2" height="3.4" rx="1.5" fill="none" stroke="#dfe0e1" stroke-width="0.95"/><path d="M8.6 253.2v-1.4a1.45 1.45 0 0 1 2.9 0v0.9" fill="none" stroke="#dfe0e1" stroke-width="0.95"/><path d="M18.3 252.4h1.5l2.7 -2.3v7.6l-2.7 -2.3h-1.5z" fill="#dfe0e1"/><path d="M23.4 250.3a3.2 3.6 0 0 1 0 7.3z" fill="#dfe0e1"/><rect x="33.1" y="250" width="7" height="7.6" fill="#dfe0e1"/><rect x="34.6" y="251.3" width="4" height="2.1" fill="#31363b"/><rect x="34.6" y="254.3" width="4" height="2.1" fill="#31363b"/><circle cx="3.4" cy="263.8" r="2.3" fill="#3a4550" stroke="#27303a" stroke-width="0.5"/><ellipse cx="3.3" cy="263.09999999999997" rx="1.2" ry="0.9" fill="#6c7a86" opacity="0.7"/><rect x="4.3" y="273.5" width="5.2" height="3.4" rx="1.5" fill="none" stroke="#dfe0e1" stroke-width="0.95"/><path d="M8.6 273.4v-1.4a1.45 1.45 0 0 1 2.9 0v0.9" fill="none" stroke="#dfe0e1" stroke-width="0.95"/><path d="M18.3 272.59999999999997h1.5l2.7 -2.3v7.6l-2.7 -2.3h-1.5z" fill="#dfe0e1"/><path d="M23.4 270.5a3.2 3.6 0 0 1 0 7.3z" fill="#dfe0e1"/><circle cx="3.4" cy="284.90000000000003" r="2.3" fill="#3a4550" stroke="#27303a" stroke-width="0.5"/><ellipse cx="3.3" cy="284.2" rx="1.2" ry="0.9" fill="#6c7a86" opacity="0.7"/><rect x="4.3" y="294.6" width="5.2" height="3.4" rx="1.5" fill="none" stroke="#dfe0e1" stroke-width="0.95"/><path d="M8.6 294.5v-1.4a1.45 1.45 0 0 1 2.9 0v0.9" fill="none" stroke="#dfe0e1" stroke-width="0.95"/><path d="M18.3 293.7h1.5l2.7 -2.3v7.6l-2.7 -2.3h-1.5z" fill="#dfe0e1"/><path d="M23.4 291.6a3.2 3.6 0 0 1 0 7.3z" fill="#dfe0e1"/><path d="M417.9 270.4L418 277.9L419.8 276.4L421.1 278.9L422.1 278.4L420.9 275.9L423.4 275.7Z" fill="#2a2d30" stroke="#bdbdbd" stroke-width="0.9" stroke-linejoin="round"/><path d="M664.5 404.5h5v3h-5zM665.5 407.5v2h3v-2M664 410h6" fill="none" stroke="#dfe0e1" stroke-width="0.8"/><rect x="675.8" y="404.5" width="5.4" height="6" fill="none" stroke="#dfe0e1" stroke-width="0.9"/><path d="M675.8 407.5h5.4" stroke="#dfe0e1" stroke-width="0.9"/><path d="M687.5 405.5v4M693.5 405.5v4M688.5 407.5h4M688.7 406l1.5 1.5 -1.5 1.5M692.3 406l-1.5 1.5 1.5 1.5" stroke="#dfe0e1" stroke-width="0.8" fill="none"/><path d="M700 404.5v6M700 404.8h4l-1 1.5 1 1.5h-4" fill="#dfe0e1" stroke="#dfe0e1" stroke-width="0.7"/><path d="M711 404.5v6M712 407.5h4M712.5 406.5l-0.8 1 0.8 1" stroke="#c8c9ca" stroke-width="0.8" fill="none"/><rect x="727" y="405" width="4.5" height="4.5" fill="none" stroke="#c8c9ca" stroke-width="0.8"/><path d="M726 404l1.5 1.5M732.5 404l-1.5 1.5M726 410.5l1.5 -1.5M732.5 410.5l-1.5 -1.5" stroke="#c8c9ca" stroke-width="0.7"/><rect x="738" y="404.5" width="5" height="5.5" fill="none" stroke="#c8c9ca" stroke-width="0.8"/><path d="M740.5 405.5v3l1.2 -1" stroke="#c8c9ca" stroke-width="0.6" fill="none"/><rect x="792" y="405" width="4.5" height="4.5" fill="none" stroke="#c8c9ca" stroke-width="0.6"/><path d="M791.5 404.5l1.5 1.5M797 404.5l-1.5 1.5M791.5 410l1.5 -1.5M797 410l-1.5 -1.5" stroke="#c8c9ca" stroke-width="0.7"/></svg>
</div></body></html>
